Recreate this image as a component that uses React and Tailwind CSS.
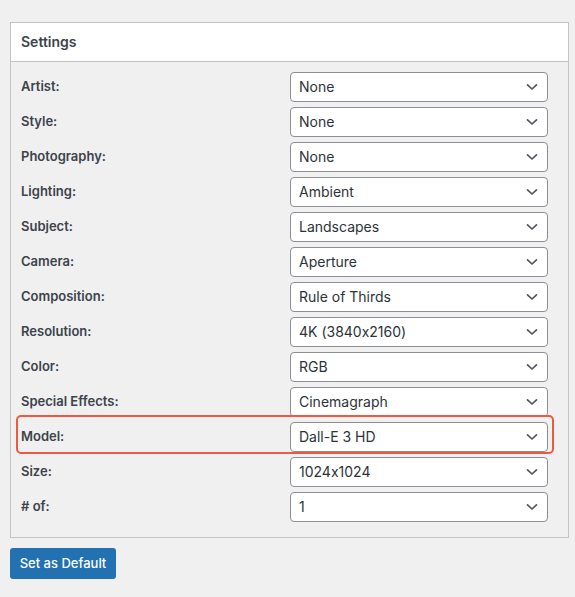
import React from "react";

const rows = [
  ["Artist:", "None"],
  ["Style:", "None"],
  ["Photography:", "None"],
  ["Lighting:", "Ambient"],
  ["Subject:", "Landscapes"],
  ["Camera:", "Aperture"],
  ["Composition:", "Rule of Thirds"],
  ["Resolution:", "4K (3840x2160)"],
  ["Color:", "RGB"],
  ["Special Effects:", "Cinemagraph"],
  ["Model:", "Dall-E 3 HD"],
  ["Size:", "1024x1024"],
  ["# of:", "1"],
];

function Chevron() {
  return (
    <svg width="12" height="8" viewBox="0 0 12 8" fill="none" className="shrink-0">
      <path d="M1.5 1.8 L6 6 L10.5 1.8" stroke="#50575e" strokeWidth="1.7" strokeLinecap="round" strokeLinejoin="round" />
    </svg>
  );
}

function Select({ value }) {
  return (
    <div className="w-[258px] h-[30px] bg-white border border-[#8c8f94] rounded-[4px] flex items-center justify-between pl-[8px] pr-[9px] text-[14px] text-[#2c3338]">
      <span className="-mt-[1px]">{value}</span>
      <Chevron />
    </div>
  );
}

export default function App() {
  return (
    <div
      className="min-h-[597px] w-[575px] bg-[#f0f0f1] pt-[22px] px-[10px] [font-feature-settings:'calt'_0]"
      style={{ fontFamily: "Inter, 'Liberation Sans', sans-serif" }}
    >
      <div className="w-[559px] border border-[#c3c4c7] bg-[#f0f0f1]">
        <div className="h-[39px] bg-white border-b border-[#c3c4c7] flex items-center pl-[10px]">
          <span className="text-[14px] font-semibold text-[#3c434a] leading-none">Settings</span>
        </div>
        <div className="flex flex-col gap-[5px] pt-[10px] pb-[15px] pl-[10px] pr-[20px]">
          {rows.map(([label, value]) => (
            <div key={label} className="relative flex items-center justify-between h-[30px]">
              {label === "Model:" && (
                <div className="absolute left-[-5px] right-[-6px] top-[-7px] bottom-[-2px] border-2 border-[#ee5a3f] rounded-[5px]" />
              )}
              <span className="relative text-[13px] font-semibold text-[#3c434a] -mt-[1px]">{label}</span>
              <div className="relative">
                <Select value={value} />
              </div>
            </div>
          ))}
        </div>
      </div>
      <button className="mt-[10px] h-[31px] w-[106px] bg-[#2271b1] text-white text-[13px] rounded-[3px] font-medium">
        Set as Default
      </button>
    </div>
  );
}
